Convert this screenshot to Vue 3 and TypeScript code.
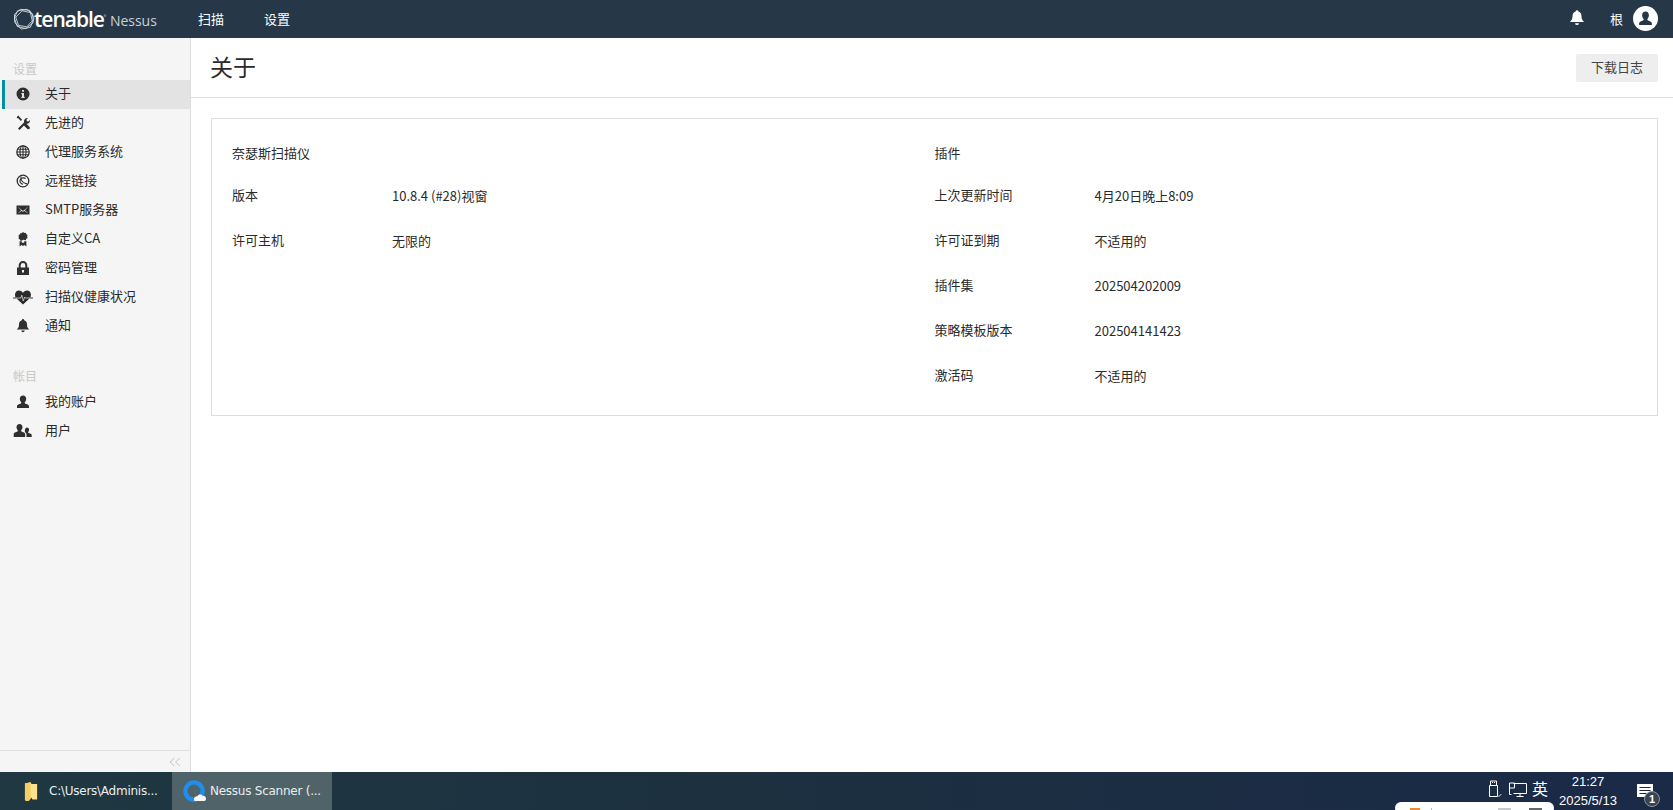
<script setup lang="ts">
interface NavItem { label: string; icon: string; active?: boolean }
const settings: NavItem[] = [
  { label: '关于', icon: 'info', active: true },
  { label: '先进的', icon: 'tools' },
  { label: '代理服务系统', icon: 'globe' },
  { label: '远程链接', icon: 'link' },
  { label: 'SMTP服务器', icon: 'mail' },
  { label: '自定义CA', icon: 'cert' },
  { label: '密码管理', icon: 'lock' },
  { label: '扫描仪健康状况', icon: 'heart' },
  { label: '通知', icon: 'bell' },
]
const account: NavItem[] = [
  { label: '我的账户', icon: 'user' },
  { label: '用户', icon: 'users' },
]
const left = [
  { k: '版本', v: '10.8.4 (#28)视窗' },
  { k: '许可主机', v: '无限的' },
]
const right = [
  { k: '上次更新时间', v: '4月20日晚上8:09' },
  { k: '许可证到期', v: '不适用的' },
  { k: '插件集', v: '202504202009' },
  { k: '策略模板版本', v: '202504141423' },
  { k: '激活码', v: '不适用的' },
]
</script>

<template>
  <div class="page">
    <header class="topbar">
      <div class="logo">
        <svg class="logo-mark" viewBox="0 0 24 24" width="22" height="22" fill="none" stroke="#dfe5ea" stroke-width="0.9">
          <polygon points="8,1.5 18,2.5 23,11 19,21 9,23 2,16 1.5,7" />
          <polygon points="5,3 15,1.5 21.5,6.5 22,16 14,22.5 4.5,20 1.5,11" />
          <polygon points="10,3 19,5 21,14 15,20.5 6,19 3,10" />
        </svg>
        <span class="logo-word">tenable</span>
        <span class="logo-reg">®</span>
        <span class="logo-prod">Nessus</span>
      </div>
      <nav class="topnav">
        <a>扫描</a>
        <a>设置</a>
      </nav>
      <div class="top-right">
        <svg class="top-bell" viewBox="0 0 16 16" width="18" height="18" fill="#fff">
          <path d="M8 1a1.200 1.200 0 0 1 1.200 1.200c2 .6 2.800 2.200 2.800 4.300 0 2.500.8 3.800 2.300 5H1.700C3.200 10.300 4 9 4 6.500c0-2.100.8-3.700 2.800-4.300A1.200 1.200 0 0 1 8 1zM6.300 12.600h3.400a1.700 1.700 0 0 1-3.400 0z" />
        </svg>
        <span class="top-user">根</span>
        <span class="avatar">
          <svg viewBox="0 0 16 16" width="17" height="17" fill="#263847">
            <path d="M8 1.500c2 0 3.200 1.500 3.200 3.500 0 1.400-.6 2.700-1.400 3.400v1.100c0 .6 3.900 1 4.200 3V14H2v-1.500c.3-2 4.200-2.400 4.200-3V8.400C5.400 7.700 4.800 6.400 4.800 5c0-2 1.200-3.500 3.200-3.500z" />
          </svg>
        </span>
      </div>
    </header>

    <div class="main">
      <aside class="sidebar">
        <div class="side-scroll">
          <div class="side-title">设置</div>
          <a v-for="item in settings" :key="item.label" class="side-item" :class="{ active: item.active }">
            <span class="side-icon">
              <svg v-if="item.icon === 'heart'" viewBox="0 0 20 16" width="20" height="16" fill="#2b2b2b">
                <path d="M10 15.500L3.500 9.500C.8 6.800 2 1.500 6 1.500c1.900 0 3.200 1 4 2.300.8-1.300 2.100-2.300 4-2.300 4 0 5.200 5.300 2.500 8z" />
                <path d="M0 9h3M17 9h3" fill="none" stroke="#2b2b2b" stroke-width="0.900" />
                <path d="M3 9h4.800l1-2.800L10.300 12l1.300-4 .7 1H17" fill="none" stroke="#dcdcdc" stroke-width="0.800" />
              </svg>
              <svg v-else viewBox="0 0 16 16" width="16" height="16" fill="#2f2f2f">
                <template v-if="item.icon === 'info'">
                  <path fill-rule="evenodd" d="M8 1.500a6.500 6.500 0 1 1 0 13 6.500 6.500 0 0 1 0-13zM7 4v1.700h2V4zM6.300 7v1.200H7v2.600h-.7V12h3.400v-1.200H9V7z" />
                </template>
                <template v-else-if="item.icon === 'tools'">
                  <path d="M2.200 2.800l1-1 3.300 3.500M9.500 9.500l3.600 3.700" fill="none" stroke="#2f2f2f" stroke-width="1.700" />
                  <path d="M9.800 8.600l1.500 0 3.500 3.600-.3 1.800-1.700.3-3.600-3.500z" />
                  <path d="M3 13.500l6.200-6.200c-.7-2 .8-4.600 3.700-4.300l-1.500 1.700.5 1.500 1.500.4 1.600-1.500c.4 2.800-2.300 4.400-4.300 3.700l-6.200 6.200z" />
                </template>
                <template v-else-if="item.icon === 'globe'">
                  <circle cx="8" cy="8" r="6.200" fill="none" stroke="#2f2f2f" stroke-width="1.300" />
                  <ellipse cx="8" cy="8" rx="3" ry="6.200" fill="none" stroke="#2f2f2f" stroke-width="1.100" />
                  <path d="M8 2v12M2 8h12M2.800 5.200h10.400M2.800 10.800h10.400" fill="none" stroke="#2f2f2f" stroke-width="1.100" />
                </template>
                <template v-else-if="item.icon === 'link'">
                  <circle cx="8" cy="8" r="5.800" fill="none" stroke="#2f2f2f" stroke-width="1.300" />
                  <path d="M6 3.600c-.6 3.400 1.600 6.400 6 7.200M10.600 5.500c-2-1.200-4.600-.6-5.400 1.500-.7 2 .6 4 2.800 4.200" fill="none" stroke="#2f2f2f" stroke-width="1.200" />
                </template>
                <template v-else-if="item.icon === 'mail'">
                  <path fill-rule="evenodd" d="M1.500 3.500h13v9h-13zM2.500 4.500l3.700 3.800-3.700 3.400 4.300-2.900L8 9.900l1.200-1.100 4.300 2.900-3.700-3.400 3.700-3.800L8 9z" />
                </template>
                <template v-else-if="item.icon === 'cert'">
                  <path d="M8 1l1.300.9 1.500-.1.500 1.400 1.300.8-.5 1.500.5 1.500-1.300.8-.5 1.400-1.500-.1L8 8.800l-1.300.9-1.500-.1-.5-1.400-1.300-.8.5-1.500-.5-1.500 1.300-.8.5-1.400 1.500.1z" />
                  <path d="M4.600 10.200h2.200v1.500h2.400v-1.500h2.200V15.500l-2-1.500L8 15l-1.400-1-2 1.500z" />
                </template>
                <template v-else-if="item.icon === 'lock'">
                  <path fill-rule="evenodd" d="M8 1a4.300 4.300 0 0 1 4.300 4.300V7.500H14V15H2V7.500h1.700V5.300A4.300 4.300 0 0 1 8 1zM8 3a2.300 2.300 0 0 0-2.300 2.300v2.200h4.600V5.300A2.300 2.300 0 0 0 8 3zM7 10v2.500h2V10z" />
                </template>
                <template v-else-if="item.icon === 'bell'">
                  <path d="M8 1a1.200 1.200 0 0 1 1.200 1.200c2 .6 2.800 2.200 2.800 4.300 0 2.500.8 3.800 2.300 5H1.700C3.200 10.300 4 9 4 6.500c0-2.100.8-3.700 2.800-4.300A1.200 1.200 0 0 1 8 1zM6.300 12.600h3.400a1.700 1.700 0 0 1-3.400 0z" />
                </template>
              </svg>
            </span>
            <span class="side-label">{{ item.label }}</span>
          </a>
          <div class="side-title second">帐目</div>
          <a v-for="item in account" :key="item.label" class="side-item">
            <span class="side-icon">
              <svg v-if="item.icon === 'user'" viewBox="0 0 16 16" width="16" height="16" fill="#2f2f2f">
                <path d="M8 1.500c2 0 3.200 1.400 3.200 3.300 0 1.400-.6 2.600-1.400 3.300v1.200c.4.700 4.200 1 4.200 3V14H2v-1.700c0-2 3.800-2.300 4.200-3V8.100C5.400 7.400 4.800 6.200 4.800 4.800c0-1.900 1.200-3.300 3.200-3.300z" />
              </svg>
              <svg v-else viewBox="0 0 20 16" width="20" height="16" fill="#2f2f2f">
                <path d="M6.500 1c1.900 0 3 1.400 3 3.100 0 1.300-.5 2.500-1.300 3.100v1.100c.4.700 4 1 4 3V14H.7v-2.700c0-2 3.700-2.300 4-3V7.200C4 6.600 3.500 5.400 3.500 4.100 3.500 2.400 4.600 1 6.500 1z" />
                <path d="M14 4.500c1.300 0 2.100 1 2.100 2.200 0 1-.4 1.800-.9 2.300v.7c.3.500 3.500.7 3.500 2.300V14h-5.200v-2.800c0-1-1-1.600-1.600-2-.1-.1.100-.2.100-.3-.2-.6-.2-1.400-.1-2 .1-1.300 1-2.400 2.100-2.400z" />
              </svg>
            </span>
            <span class="side-label">{{ item.label }}</span>
          </a>
        </div>
        <div class="collapse">
          <svg viewBox="0 0 12 10" width="12" height="10" fill="none" stroke="#c4c4c4" stroke-width="1">
            <path d="M5.500 1L1 5l4.500 4M11 1L6.500 5l4.500 4" />
          </svg>
        </div>
      </aside>

      <main class="content">
        <div class="content-head">
          <h1>关于</h1>
          <button class="log-btn" type="button">下载日志</button>
        </div>
        <section class="panel">
          <div class="col">
            <div class="row head"><span class="key">奈瑟斯扫描仪</span></div>
            <div v-for="r in left" :key="r.k" class="row">
              <span class="key">{{ r.k }}</span>
              <span class="val">{{ r.v }}</span>
            </div>
          </div>
          <div class="col">
            <div class="row head"><span class="key">插件</span></div>
            <div v-for="r in right" :key="r.k" class="row">
              <span class="key">{{ r.k }}</span>
              <span class="val">{{ r.v }}</span>
            </div>
          </div>
        </section>
      </main>
    </div>

    <footer class="taskbar">
      <div class="task">
        <svg viewBox="0 0 16 22" width="15" height="21">
          <path d="M1 2.500L7 1l1 2h6v16.500H9l-1-2-3 3.500H2.500L1 20z" fill="#fbe08e" />
          <path d="M1 2.500L7 1v17l-2 3H2.500L1 20z" fill="#f5cd63" />
        </svg>
        <span>C:\Users\Adminis...</span>
      </div>
      <div class="task task-active">
        <svg viewBox="0 0 24 24" width="23" height="23">
          <circle cx="11.500" cy="11.500" r="9" fill="none" stroke="#1e8fee" stroke-width="4.500" />
          <path d="M12 22c-1.500-3 .5-5 3-5 1-2 4-2.500 5.500-.5 2-.2 3.500 1.200 3.500 3 0 1.500-1 2.500-2.500 2.500z" fill="#f4f8fb" />
        </svg>
        <span>Nessus Scanner (...</span>
      </div>
      <div class="tray">
        <svg class="usb" viewBox="0 0 14 18" width="14" height="18" fill="none" stroke="#fff" stroke-width="1">
          <path d="M2.500 5.500V1h6v4.500M1.500 5.500h8v11h-8zM4 2.500h1M6 2.500h1" />
          <path d="M10 15.500l1 1 2.300-2.500" stroke-width="0.800" />
        </svg>
        <svg class="monitor" viewBox="0 0 18 16" width="18" height="16" fill="none" stroke="#fff" stroke-width="1">
          <path d="M4.500 1.500h13v10h-13M11 11.500v3M7.500 14.500h7M.5 4.500v8h2" />
          <path d="M.5 1h5v5h-5z" />
        </svg>
        <span class="ime">英</span>
        <div class="clock">
          <span>21:27</span>
          <span>2025/5/13</span>
        </div>
        <div class="notify">
          <svg viewBox="0 0 16 13" width="16" height="13">
            <path d="M0 0h16v13H0z" fill="#fff" />
            <path d="M2.500 3.500h11M2.500 6.500h11M2.500 9.500h7" stroke="#1a2a45" stroke-width="1.200" />
          </svg>
          <span class="badge">1</span>
        </div>
      </div>
      <div class="popup">
        <i class="p1"></i><i class="p2"></i><i class="p3"></i><i class="p4"></i>
      </div>
    </footer>
  </div>
</template>

<style scoped>
.page {
  width: 1673px;
  height: 810px;
  display: flex;
  flex-direction: column;
  overflow: hidden;
  font-family: "Noto Sans CJK SC", "Open Sans", sans-serif;
  font-size: 13px;
  color: #2a2a2a;
  background: #fff;
}
.topbar {
  height: 38px;
  flex: none;
  display: flex;
  align-items: center;
  box-sizing: border-box;
  background: #263847;
  color: #fff;
  padding: 0 15px 0 13px;
}
.logo { display: flex; align-items: center; width: 185px; color: #fff; }
.logo-mark { flex: none; margin-right: -1px; }
.logo-word {
  font-family: "Open Sans", sans-serif;
  font-weight: 600;
  font-size: 21px;
  letter-spacing: -1px;
  line-height: 38px;
}
.logo-reg { font-size: 4px; align-self: flex-start; margin-top: 13px; margin-right: 4px; color: #ccd; }
.logo-prod {
  font-family: "Open Sans", sans-serif;
  font-size: 14px;
  color: #c9d0d6;
  margin-top: 3px;
}
.topnav { display: flex; gap: 40px; }
.topnav a { line-height: 36px; font-size: 13px; }
.top-right { margin-left: auto; display: flex; align-items: center; }
.top-bell { margin-right: 24px; margin-bottom: 2px; }
.top-user { font-size: 13px; margin-right: 10px; padding-bottom: 2px; }
.avatar {
  width: 25px;
  height: 25px;
  margin-bottom: 1px;
  border-radius: 50%;
  background: #fff;
  display: flex;
  align-items: center;
  justify-content: center;
}
.main { flex: 1; display: flex; min-height: 0; }
.sidebar {
  width: 191px;
  flex: none;
  box-sizing: border-box;
  background: #f5f5f5;
  border-right: 1px solid #ddd;
  display: flex;
  flex-direction: column;
}
.side-scroll { flex: 1; padding-top: 21px; }
.side-title {
  height: 21px;
  line-height: 20px;
  padding-left: 13px;
  color: #c8c8c8;
  font-size: 12px;
}
.side-title.second { margin-top: 26px; line-height: 17px; }
.side-item {
  height: 29px;
  display: flex;
  align-items: center;
  margin-left: 2px;
  padding-left: 3px;
  padding-bottom: 1px;
  box-sizing: border-box;
  font-size: 13px;
  color: #2a2a2a;
  border-left: 3px solid transparent;
}
.side-label { padding-bottom: 3px; }
.side-item.active { background: #e3e3e3; border-left-color: #008fa3; }
.side-icon { width: 37px; flex: none; display: flex; justify-content: center; padding-right: 8px; box-sizing: border-box; }
.collapse {
  height: 21px;
  flex: none;
  border-top: 1px solid #e0e0e0;
  display: flex;
  align-items: center;
  justify-content: flex-end;
  padding-right: 9px;
}
.content { flex: 1; min-width: 0; }
.content-head {
  height: 60px;
  box-sizing: border-box;
  border-bottom: 1px solid #ddd;
  display: flex;
  align-items: center;
  justify-content: space-between;
  padding: 0 15px 0 19px;
}
h1 { margin: 0; padding-bottom: 4px; font-size: 23px; font-weight: 400; color: #2a2a2a; }
.log-btn {
  width: 82px;
  height: 28px;
  border: 0;
  border-radius: 2px;
  background: #eee;
  color: #444;
  font: inherit;
  font-size: 13px;
  padding: 0 0 2px;
}
.panel {
  margin: 20px 15px 0 20px;
  height: 298px;
  box-sizing: border-box;
  border: 1px solid #ddd;
  padding: 13px 20px 17px;
  display: grid;
  grid-template-columns: 1fr 1fr;
}
.row { height: 45px; display: flex; align-items: center; }
.row.head { height: 40px; }
.key { width: 160px; flex: none; }
.val { padding-top: 2px; }
.taskbar {
  position: relative;
  height: 38px;
  flex: none;
  display: flex;
  align-items: stretch;
  padding-left: 16px;
  background: linear-gradient(90deg, #1f3841 0%, #1c3040 45%, #1a2a47 100%);
  color: #e9eef0;
  font-family: "DejaVu Sans", sans-serif;
  font-size: 12px;
  letter-spacing: -0.25px;
}
.task { width: 156px; display: flex; align-items: center; gap: 10px; padding-left: 8px; box-sizing: border-box; white-space: nowrap; }
.task-active { width: 160px; padding-left: 11px; gap: 4px; background: #4f6369; }
.tray { margin-left: auto; display: flex; align-items: center; color: #fff; letter-spacing: 0; }
.usb { margin-right: 7px; margin-bottom: 4px; }
.monitor { margin-bottom: 3px; }
.ime { font-family: "Noto Sans CJK SC", sans-serif; font-size: 16px; margin-left: 5px; margin-right: 10px; padding-bottom: 6px; }
.clock { display: flex; flex-direction: column; align-items: center; width: 60px; line-height: 19px; font-family: "Liberation Sans", sans-serif; font-size: 13px; }
.notify { position: relative; width: 16px; margin: 0 20px 0 19px; height: 100%; padding-top: 12px; box-sizing: border-box; }
.notify svg { display: block; }
.badge {
  position: absolute;
  left: 7px;
  top: 19px;
  width: 16px;
  height: 16px;
  box-sizing: border-box;
  border-radius: 50%;
  border: 1px solid #8b95a0;
  background: #3a4450;
  color: #fff;
  font: 700 11px/14px "Liberation Sans", sans-serif;
  text-align: center;
}
.popup {
  position: absolute;
  left: 1395px;
  top: 30px;
  width: 159px;
  height: 12px;
  background: #fff;
  border-radius: 7px;
}
.popup i { position: absolute; top: 6px; height: 3px; }
.p1 { left: 15px; width: 10px; background: #ee8a35; }
.p2 { left: 36px; width: 1px; background: #bbb; }
.p3 { left: 103px; width: 13px; background: #c9c9c9; }
.p4 { left: 134px; width: 13px; background: #666; }
</style>

<style>
html, body { margin: 0; background: #fff; }
</style>
